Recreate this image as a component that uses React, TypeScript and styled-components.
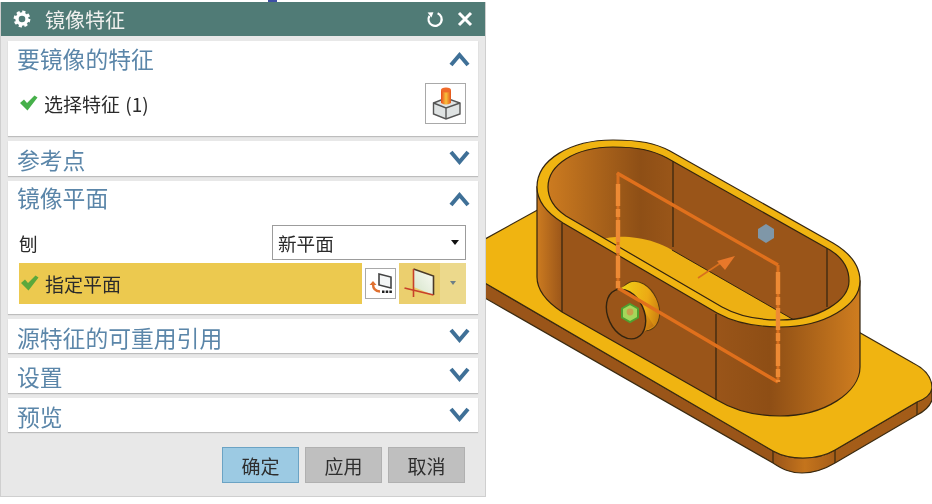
import React from 'react'
import styled, { createGlobalStyle } from 'styled-components'

const GlobalStyle = createGlobalStyle`
  html, body {
    margin: 0;
    padding: 0;
    background: #fff;
    font-family: "Noto Sans CJK SC", "Liberation Sans", sans-serif;
  }
`

const Chevron = ({ up }: { up?: boolean }) => (
  <svg width="21" height="16" viewBox="0 0 21 16">
    <path
      d={up ? 'M2 14 L10.5 4 L19 14' : 'M2 2 L10.5 12 L19 2'}
      fill="none"
      stroke="#3f7097"
      strokeWidth="4"
    />
  </svg>
)

const Check = ({ color = '#46b04a' }: { color?: string }) => (
  <svg width="18" height="16" viewBox="0 0 18 16">
    <path d="M0 8 L4 4.5 L7 8 L14.5 0.5 L17.5 2.5 L7.5 15.5 Z" fill={color} />
  </svg>
)

const GearIcon = () => (
  <svg width="18" height="18" viewBox="0 0 18 18">
    <circle cx="9" cy="9" r="5" fill="none" stroke="#fff" strokeWidth="3.4" />
    <circle cx="9" cy="9" r="7.2" fill="none" stroke="#fff" strokeWidth="2.4" strokeDasharray="3.2 2.45" />
  </svg>
)

const ResetIcon = () => (
  <svg width="18" height="18" viewBox="0 0 18 18">
    <path d="M11.6 3.2 A6.6 6.6 0 1 1 3.5 5.8" fill="none" stroke="#fff" strokeWidth="2.2" />
    <path d="M1.6 2.6 L7.4 2.2 L5.4 7.4 Z" fill="#fff" />
  </svg>
)

const CloseIcon = () => (
  <svg width="18" height="18" viewBox="0 0 18 18">
    <path d="M3 3 L15 15 M15 3 L3 15" stroke="#fff" strokeWidth="3" />
  </svg>
)

const FeatureIcon = () => (
  <svg width="30" height="34" viewBox="0 0 30 34">
    <defs>
      <linearGradient id="cyl" x1="0" x2="1" y1="0" y2="0">
        <stop offset="0" stopColor="#e8481c" />
        <stop offset="0.5" stopColor="#f8c23c" />
        <stop offset="1" stopColor="#e2521c" />
      </linearGradient>
    </defs>
    <path d="M2.5 17 L15 12 L29 17 L29 28 L15 33 L2.5 28 Z" fill="#dfe3e3" stroke="#555" strokeWidth="1.4" />
    <path d="M2.5 17 L15 22 L29 17 M15 22 L15 33" fill="none" stroke="#555" strokeWidth="1.4" />
    <path d="M10 4 L10 17 Q15 20 20 17 L20 4 Z" fill="url(#cyl)" />
    <ellipse cx="15" cy="4" rx="5" ry="2.5" fill="#f06a2a" />
  </svg>
)

const ReuseIcon = () => (
  <svg width="28" height="26" viewBox="0 0 28 26">
    <path d="M12 4 L24 7 L24 18 L12 15 Z" fill="#f4f6f6" stroke="#444" strokeWidth="1.6" />
    <path d="M6 14 Q6 21 13 21.5" fill="none" stroke="#e07030" strokeWidth="2.4" />
    <path d="M2.5 15 L6 11 L9.5 15 Z" fill="#e07030" />
    <path d="M15 20.5 h2.5 v2.5 h-2.5 z M18.7 20.5 h2.5 v2.5 h-2.5 z M22.4 20.5 h2.5 v2.5 h-2.5 z" fill="#222" />
  </svg>
)

const PlaneIcon = () => (
  <svg width="34" height="36" viewBox="0 0 34 36">
    <defs>
      <linearGradient id="pl" x1="0" x2="1" y1="1" y2="0">
        <stop offset="0" stopColor="#d4e4c8" />
        <stop offset="1" stopColor="#fbfbf6" />
      </linearGradient>
    </defs>
    <path d="M10.5 4 L30.5 11 L30.5 30 L10.5 22 Z" fill="url(#pl)" />
    <path d="M10.5 4 L30.5 11 L30.5 30" fill="none" stroke="#4a3a28" strokeWidth="1.6" />
    <path d="M1.5 23 L30.5 30" stroke="#c8402a" strokeWidth="1.8" />
    <path d="M10.5 4 L10.5 32" stroke="#c8402a" strokeWidth="1.6" />
  </svg>
)

const CadScene = () => (
  <SceneSvg viewBox="486 0 446 504">
    <defs>
      <linearGradient id="wallOut" gradientUnits="userSpaceOnUse" x1="537" x2="860" y1="0" y2="0">
        <stop offset="0" stopColor="#cc7b20" />
        <stop offset="0.08" stopColor="#9a5519" />
        <stop offset="0.55" stopColor="#9a5519" />
        <stop offset="0.72" stopColor="#8e4e15" />
        <stop offset="1" stopColor="#cf7d1f" />
      </linearGradient>
      <linearGradient id="wallIn" gradientUnits="userSpaceOnUse" x1="548" x2="680" y1="0" y2="0">
        <stop offset="0" stopColor="#cc7b20" />
        <stop offset="0.7" stopColor="#8e4f16" />
        <stop offset="1" stopColor="#9c5719" />
      </linearGradient>
      <linearGradient id="plateSide" gradientUnits="userSpaceOnUse" x1="773" x2="932" y1="0" y2="0">
        <stop offset="0" stopColor="#9a5519" />
        <stop offset="0.2" stopColor="#c4741c" />
        <stop offset="0.4" stopColor="#a55d18" />
        <stop offset="1" stopColor="#a35c18" />
      </linearGradient>
      <linearGradient id="boss" x1="0" x2="1" y1="0" y2="1">
        <stop offset="0" stopColor="#f0d818" />
        <stop offset="0.6" stopColor="#ecaa14" />
        <stop offset="1" stopColor="#b8660f" />
      </linearGradient>
      <clipPath id="innerClip">
        <path d="M548,187 C548,165 575,147 613,147 C637,147 652,150 667,158 L830,250 C843,258 849,268 849,281 C849,300 820,320 780,320 C757,320 738,316 722,307 L566,216 C554,208 548,198 548,187 Z" />
      </clipPath>
    </defs>

    {/* base plate */}
    <path
      d="M485,283 L773,451 C782,456 792,458 803,458 C815,458 825,456 835,450 L917,402 C925,398 931,394 932,388 L932,400 C930,406 925,411 917,415 L835,463 C825,469 815,473 802,473 C790,473 782,469 773,463 L485,298 Z"
      fill="url(#plateSide)"
      stroke="#3a2a10"
      strokeWidth="1.2"
    />
    <path
      d="M485,239 L592,180 L913,363 C925,369 932,378 932,388 C931,395 925,399 917,402 L835,450 C825,456 815,458 803,458 C792,458 782,456 773,451 L485,283 Z"
      fill="#f0b411"
      stroke="#3a2a10"
      strokeWidth="1.2"
    />
    <path d="M773,451 L773,463 M835,450 L835,463 M917,402 L917,415" stroke="#3a2a10" strokeWidth="1.2" />

    {/* outer wall */}
    <path
      d="M537,187 L537,277 C537,290 547,302 562,312 L717,400 C735,411 757,416 780,416 C825,416 860,392 860,367 L860,281 Z"
      fill="url(#wallOut)"
      stroke="#33240f"
      strokeWidth="1.2"
    />
    <path d="M562,223 L562,312 M716,314 L716,400" stroke="#33240f" strokeWidth="1.2" />

    {/* rim and inside */}
    <path
      d="M537,187 C537,160 570,140 613,140 C640,140 655,143 670,151 L833,243 C850,253 860,266 860,281 C860,305 825,327 780,327 C755,327 735,323 717,313 L563,223 C547,213 537,201 537,187 Z"
      fill="#f0b411"
      stroke="#33240f"
      strokeWidth="1.2"
    />
    <g clipPath="url(#innerClip)">
      <rect x="540" y="140" width="320" height="190" fill="#9a5519" />
      <rect x="548" y="140" width="125" height="120" fill="url(#wallIn)" />
      <path
        d="M600,240 C610,236 625,236 637,238 C650,240 660,243 672,250 L794,320 L800,330 L700,330 L590,245 Z"
        fill="#edb013"
      />
      <path d="M673,157 L673,247 M827,248 L827,307" stroke="#33240f" strokeWidth="1.2" />
      <path d="M672,250 L794,320" stroke="#33240f" strokeWidth="1" />
    </g>
    <path
      d="M548,187 C548,165 575,147 613,147 C637,147 652,150 667,158 L830,250 C843,258 849,268 849,281 C849,300 820,320 780,320 C757,320 738,316 722,307 L566,216 C554,208 548,198 548,187 Z"
      fill="none"
      stroke="#33240f"
      strokeWidth="1.2"
    />

    {/* boss on the wall */}
    <ellipse cx="640" cy="306" rx="18" ry="26" transform="rotate(-25 640 306)" fill="url(#boss)" stroke="#5a3a10" strokeWidth="1" />
    <path d="M614,292 L628,284 L654,326 L640,334 Z" fill="url(#boss)" />
    <ellipse cx="626" cy="314" rx="18" ry="26" transform="rotate(-25 626 314)" fill="#9a5519" stroke="#33240f" strokeWidth="1.4" />

    {/* mirror plane */}
    <path d="M617,173 L778,265 M778,382 L618,288" stroke="#e0701c" strokeWidth="3.4" fill="none" />
    <path d="M618,173 L618,288 M778,265 L778,382" stroke="#d9701e" strokeWidth="3" fill="none" />
    <path d="M618,184 L618,288 M778,272 L778,382" stroke="#ee8a34" strokeWidth="4.4" strokeDasharray="22 3 8 3" fill="none" />
    <path d="M698,278 L722,262" stroke="#d9701e" strokeWidth="1.6" />
    <path d="M735,256 L717,261 L725,270 Z" fill="#e8782a" />

    {/* handles */}
    <path d="M766,224 L774,229 L774,238 L766,243 L758,238 L758,229 Z" fill="#7f97a8" />
    <path d="M630,304 L638,308.5 L638,317.5 L630,322 L622,317.5 L622,308.5 Z" fill="#a6d65a" stroke="#4fa030" strokeWidth="2" />
    <circle cx="630" cy="312" r="3.4" fill="#c9a04a" />
  </SceneSvg>
)

const Section = ({ title, open, children }: { title: string; open?: boolean; children?: React.ReactNode }) => (
  <SectionBox $open={open}>
    <SectionHeader $open={open}>
      <SectionTitle $open={open}>{title}</SectionTitle>
      <Chevron up={open} />
    </SectionHeader>
    {children}
  </SectionBox>
)

const App = () => (
  <Page>
    <GlobalStyle />
    <Left>
      <TopStrip>
        <TopMark />
      </TopStrip>
      <Dialog>
        <TitleBar>
          <GearIcon />
          <DialogTitle>镜像特征</DialogTitle>
          <TitleActions>
            <ResetIcon />
            <CloseIcon />
          </TitleActions>
        </TitleBar>
        <Sections>
          <Section title="要镜像的特征" open>
            <FeatureRow>
              <Check />
              <StepLabel>选择特征 (1)</StepLabel>
              <IconButton>
                <FeatureIcon />
              </IconButton>
            </FeatureRow>
          </Section>
          <Section title="参考点" />
          <Section title="镜像平面" open>
            <FieldRow>
              <FieldLabel>刨</FieldLabel>
              <Select>
                <span>新平面</span>
                <Caret />
              </Select>
            </FieldRow>
            <ActiveRow>
              <ActiveStep>
                <Check color="#5aa83c" />
                <StepLabel>指定平面</StepLabel>
              </ActiveStep>
              <SmallButton>
                <ReuseIcon />
              </SmallButton>
              <PlaneSplit>
                <PlanePart>
                  <PlaneIcon />
                </PlanePart>
                <PlaneDrop>
                  <SmallCaret />
                </PlaneDrop>
              </PlaneSplit>
            </ActiveRow>
          </Section>
          <Section title="源特征的可重用引用" />
          <Section title="设置" />
          <Section title="预览" />
        </Sections>
        <Footer>
          <ActionButton $primary>确定</ActionButton>
          <ActionButton>应用</ActionButton>
          <ActionButton>取消</ActionButton>
        </Footer>
      </Dialog>
    </Left>
    <Viewport>
      <CadScene />
    </Viewport>
  </Page>
)

const Page = styled.div`
  display: flex;
  width: 932px;
  height: 504px;
  overflow: hidden;
  background: #fff;
  filter: blur(0.45px);
`
const Left = styled.div`
  width: 486px;
  flex: none;
  display: flex;
  flex-direction: column;
`
const TopStrip = styled.div`
  height: 2px;
  padding-left: 268px;
`
const TopMark = styled.div`
  width: 9px;
  height: 2px;
  background: #3d4fa6;
`
const Dialog = styled.div`
  height: 495px;
  box-sizing: border-box;
  background: #e8e8e8;
  border: 1px solid #cfcfcf;
  border-top: none;
  display: flex;
  flex-direction: column;
`
const TitleBar = styled.div`
  height: 34px;
  flex: none;
  background: #507b76;
  display: flex;
  align-items: center;
  padding: 0 11px 0 12px;
`
const DialogTitle = styled.div`
  margin: 1px 0 0 14px;
  color: #f0f0ee;
  font-size: 20px;
  line-height: 34px;
`
const TitleActions = styled.div`
  margin-left: auto;
  display: flex;
  align-items: center;
  gap: 12px;
`
const Sections = styled.div`
  display: flex;
  flex-direction: column;
  gap: 5px;
  padding: 5px 7px 0;
`
const SectionBox = styled.div<{ $open?: boolean }>`
  background: #fff;
  box-shadow: 0 1px 1px #bdbdbd;
  height: ${p => (p.$open ? 'auto' : '34.5px')};
`
const SectionHeader = styled.div<{ $open?: boolean }>`
  height: ${p => (p.$open ? '39px' : '34.5px')};
  box-sizing: border-box;
  display: flex;
  align-items: center;
  justify-content: space-between;
  padding: ${p => (p.$open ? '0 8px 3px 9px' : '0 8px 0 9px')};
`
const SectionTitle = styled.div<{ $open?: boolean }>`
  color: #5b86a9;
  font-size: 22.8px;
  line-height: 30px;
  margin: ${p => (p.$open ? '0 0 1px' : '4px 0 0')};
`
const FeatureRow = styled.div`
  display: flex;
  align-items: center;
  height: 56px;
  box-sizing: border-box;
  padding: 0 12px 10px 12px;
`
const StepLabel = styled.span`
  margin-left: 6px;
  color: #2b2b2b;
  font-size: 19px;
  word-spacing: 1px;
`
const IconButton = styled.div`
  margin-left: auto;
  width: 41px;
  height: 41px;
  box-sizing: border-box;
  border: 1px solid #a9a9a9;
  display: flex;
  align-items: center;
  justify-content: center;
`
const FieldRow = styled.div`
  display: flex;
  align-items: flex-end;
  justify-content: space-between;
  padding: 5px 12px 0 11px;
  height: 40px;
  box-sizing: border-box;
`
const FieldLabel = styled.span`
  color: #2b2b2b;
  font-size: 18.6px;
  line-height: 35px;
`
const Select = styled.div`
  width: 194px;
  height: 35px;
  box-sizing: border-box;
  border: 1px solid #9c9c9c;
  display: flex;
  align-items: center;
  justify-content: space-between;
  padding: 0 6px 0 5px;
  color: #2b2b2b;
  font-size: 18.6px;
`
const Caret = styled.div`
  width: 0;
  height: 0;
  border-left: 4.5px solid transparent;
  border-right: 4.5px solid transparent;
  border-top: 5px solid #111;
`
const ActiveRow = styled.div`
  display: flex;
  align-items: center;
  margin: 3px 12px 10px 11px;
  height: 41px;
`
const ActiveStep = styled.div`
  width: 343px;
  height: 41px;
  box-sizing: border-box;
  background: #ecc94f;
  display: flex;
  align-items: center;
  padding-left: 2px;
`
const SmallButton = styled.div`
  margin-left: 3px;
  width: 31px;
  height: 31px;
  box-sizing: border-box;
  background: #fff;
  border: 1px solid #a9a9a9;
  display: flex;
  align-items: center;
  justify-content: center;
`
const PlaneSplit = styled.div`
  margin-left: 3px;
  display: flex;
  height: 41px;
`
const PlanePart = styled.div`
  width: 41px;
  background: #ebcf6e;
  display: flex;
  align-items: center;
  justify-content: center;
`
const PlaneDrop = styled.div`
  width: 26px;
  background: #ecd98c;
  display: flex;
  align-items: center;
  justify-content: center;
`
const SmallCaret = styled.div`
  width: 0;
  height: 0;
  border-left: 3.5px solid transparent;
  border-right: 3.5px solid transparent;
  border-top: 4px solid #6d7f86;
`
const Footer = styled.div`
  display: flex;
  justify-content: flex-end;
  gap: 6px;
  padding: 15px 20px 0 0;
`
const ActionButton = styled.div<{ $primary?: boolean }>`
  width: 77px;
  height: 36px;
  box-sizing: border-box;
  background: ${p => (p.$primary ? '#9ccae3' : '#bfbfbf')};
  border: 1px solid ${p => (p.$primary ? '#6ba3c4' : '#b0b0b0')};
  color: #2e2e2e;
  font-size: 19px;
  display: flex;
  align-items: center;
  justify-content: center;
`
const Viewport = styled.div`
  flex: 1;
  min-width: 0;
`
const SceneSvg = styled.svg`
  display: block;
  width: 446px;
  height: 504px;
`

export default App
